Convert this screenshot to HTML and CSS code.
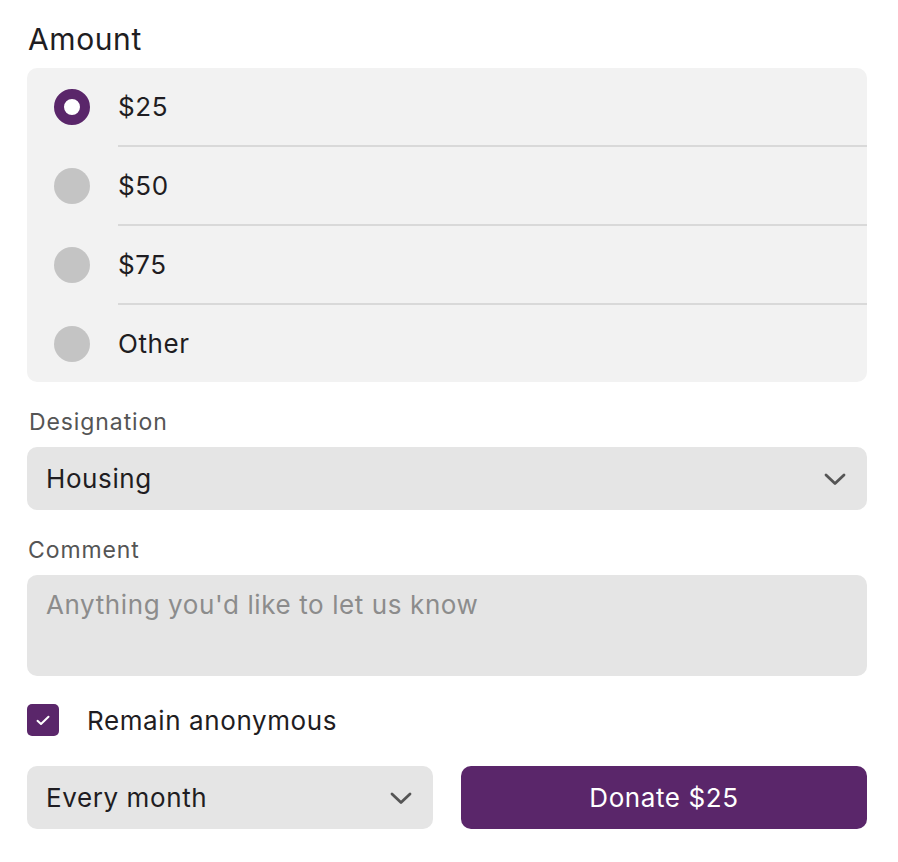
FILE: index.html
```html
<!DOCTYPE html>
<html lang="en">
<head>
<meta charset="utf-8">
<title>Donate</title>
<link rel="stylesheet" href="styles.css">
</head>
<body>
<form class="donate">
  <h2 class="heading">Amount</h2>
  <div class="options">
    <label class="option">
      <span class="radio radio-on"></span>
      <span class="option-text">$25</span>
    </label>
    <div class="divider"></div>
    <label class="option">
      <span class="radio"></span>
      <span class="option-text">$50</span>
    </label>
    <div class="divider"></div>
    <label class="option">
      <span class="radio"></span>
      <span class="option-text">$75</span>
    </label>
    <div class="divider"></div>
    <label class="option">
      <span class="radio"></span>
      <span class="option-text">Other</span>
    </label>
  </div>

  <div class="field-label">Designation</div>
  <div class="select">
    <span class="select-text">Housing</span>
    <svg class="chevron" width="22" height="13" viewBox="0 0 22 13"><path d="M2 2 L11 10.5 L20 2" fill="none" stroke="#555" stroke-width="2.8" stroke-linecap="round" stroke-linejoin="round"/></svg>
  </div>

  <div class="field-label field-label-c">Comment</div>
  <textarea class="comment" placeholder="Anything you'd like to let us know"></textarea>

  <label class="check-row">
    <span class="checkbox">
      <svg width="14" height="11" viewBox="0 0 14 11"><path d="M1.5 5.8 L5 9 L12.5 1.8" fill="none" stroke="#fff" stroke-width="2" stroke-linecap="round" stroke-linejoin="round"/></svg>
    </span>
    <span class="check-text">Remain anonymous</span>
  </label>

  <div class="actions">
    <div class="select">
      <span class="select-text">Every month</span>
      <svg class="chevron" width="22" height="13" viewBox="0 0 22 13"><path d="M2 2 L11 10.5 L20 2" fill="none" stroke="#555" stroke-width="2.8" stroke-linecap="round" stroke-linejoin="round"/></svg>
    </div>
    <button type="button" class="donate-btn">Donate $25</button>
  </div>
</form>
</body>
</html>
```
FILE: styles.css
```css
* { box-sizing: border-box; }
html, body { margin: 0; padding: 0; background: #fff; }
body {
  font-family: "Inter", "Liberation Sans", sans-serif;
  color: #1f1d22;
}
.donate {
  width: 840px;
  margin-left: 27px;
  padding-top: 21px;
}
.heading {
  margin: 0 0 11px 1px;
  font-size: 30px;
  line-height: 36px;
  font-weight: 400;
  letter-spacing: 0.6px;
}
.options {
  background: #f2f2f2;
  border-radius: 10px;
  display: flex;
  flex-direction: column;
}
.option {
  height: 77px;
  display: flex;
  align-items: center;
  padding-left: 27px;
}
.radio {
  width: 36px;
  height: 36px;
  border-radius: 50%;
  background: #c4c4c4;
  flex: none;
}
.radio-on {
  background: #fff;
  border: 10.5px solid #5a266a;
}
.option-text {
  margin-left: 28px;
  font-size: 26px;
  letter-spacing: 0.6px;
}
.divider {
  height: 2px;
  background: #d9d9d9;
  margin-left: 91px;
}
.field-label {
  margin: 27px 0 12px 2px;
  font-size: 23px;
  line-height: 26px;
  color: #555;
  letter-spacing: 0.9px;
}
.field-label-c { margin-left: 1px; }
.select {
  height: 63px;
  background: #e5e5e5;
  border-radius: 10px;
  display: flex;
  align-items: center;
  justify-content: space-between;
  padding: 0 21px 0 19px;
}
.select-text {
  font-size: 26px;
  color: #1f1d22;
  letter-spacing: 0.6px;
}
.chevron { flex: none; margin-top: 1px; }
.comment {
  display: block;
  width: 100%;
  height: 101px;
  margin: 0;
  border: none;
  outline: none;
  resize: none;
  background: #e5e5e5;
  border-radius: 10px;
  padding: 14px 19px;
  font-family: inherit;
  font-size: 26px;
  line-height: 32px;
  letter-spacing: 0.6px;
  color: #1f1d22;
}
.comment::placeholder { color: #8c8c8c; }
.check-row {
  display: flex;
  align-items: center;
  margin-top: 28px;
  height: 32px;
}
.checkbox {
  width: 32px;
  height: 32px;
  border-radius: 5px;
  background: #5a266a;
  display: flex;
  align-items: center;
  justify-content: center;
  flex: none;
}
.check-text {
  margin-left: 28px;
  font-size: 26px;
  letter-spacing: 0.6px;
}
.actions {
  margin-top: 30px;
  display: grid;
  grid-template-columns: 1fr 1fr;
  gap: 28px;
}
.donate-btn {
  height: 63px;
  border: none;
  border-radius: 10px;
  background: #5a266a;
  color: #fff;
  font-family: inherit;
  font-size: 26px;
  letter-spacing: 0.6px;
  padding: 0;
}
```
